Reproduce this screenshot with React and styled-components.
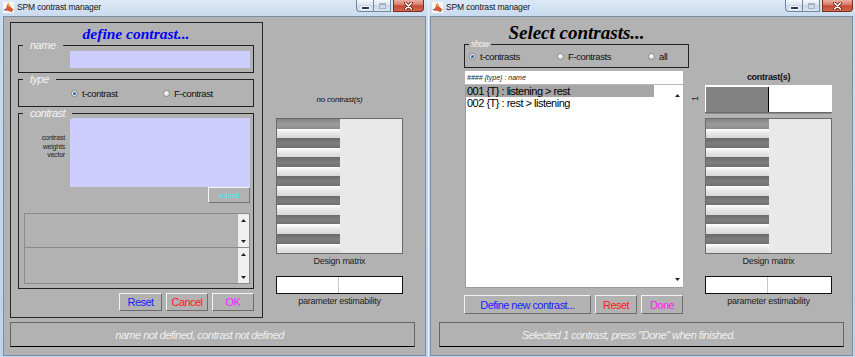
import React from 'react';
import styled, { createGlobalStyle } from 'styled-components';

const Global = createGlobalStyle`
  html, body { margin: 0; padding: 0; background: #c3d6ec; }
  body {
    width: 855px; height: 357px; overflow: hidden;
    font-family: "Liberation Sans", Arial, sans-serif;
  }
  * { box-sizing: border-box; }
`;

const GREY = '#b2b2b2';

const Desktop = styled.div`
  display: flex;
  width: 855px;
  height: 357px;
`;

const Window = styled.div`
  width: ${p => p.$w}px;
  height: 357px;
  display: flex;
  flex-direction: column;
  background: linear-gradient(to bottom, #dce8f6 0px, #c9dbef 16px, #bfd3ea 100%);
  border-left: ${p => (p.$edge ? '1px solid #eaf2fb' : 'none')};
`;

const TitleBar = styled.div`
  height: 16px;
  display: flex;
  align-items: flex-start;
  padding-left: ${p => p.$pl}px;
`;

const AppIcon = styled.svg`
  width: 11px;
  height: 11px;
  margin-top: 2px;
  flex: none;
`;

const TitleText = styled.div`
  margin-left: 3px;
  font-size: 8.5px;
  letter-spacing: -0.15px;
  line-height: 15px;
  color: #141414;
  flex: 1;
`;

const CaptionGroup = styled.div`
  display: flex;
  margin-right: ${p => p.$mr}px;
`;

const CapBtn = styled.div`
  height: 12px;
  width: ${p => p.$w}px;
  display: flex;
  align-items: center;
  justify-content: center;
  border: 1px solid #75869c;
  border-top: none;
  background: linear-gradient(to bottom, #f3f7fc 0%, #dbe6f2 45%, #c7d6e8 50%, #d9e5f2 100%);
  border-radius: ${p => p.$r};
  border-left: ${p => (p.$noLeft ? 'none' : '1px solid #75869c')};
`;

const CloseBtn = styled.div`
  height: 12px;
  width: 31px;
  margin-left: 2px;
  display: flex;
  align-items: center;
  justify-content: center;
  border: 1px solid #7c2d1f;
  border-top: none;
  border-radius: 0 0 4px 0;
  background: linear-gradient(to bottom, #eab0a3 0%, #d77a66 45%, #c24a32 52%, #d2684d 100%);
`;

const MinGlyph = styled.div`
  width: 7px;
  height: 2px;
  margin-top: 4px;
  background: #2f3a48;
  box-shadow: 0 0 0 1px #f4f8fc;
`;

const MaxGlyph = styled.div`
  width: 7px;
  height: 6px;
  border: 1px solid #a6b2c2;
  border-top-width: 2px;
`;

const Frame = styled.div`
  flex: 1;
  display: flex;
  padding: 0 ${p => p.$pr}px 1px ${p => p.$pl}px;
`;

const Client = styled.div`
  width: 423px;
  height: 340px;
  border: 1px solid #7b8ea6;
  background: ${GREY};
  padding: 5px 0 0 ${p => p.$pl}px;
  display: flex;
  flex-direction: column;
`;

const Row = styled.div`
  height: 296px;
  display: flex;
  align-items: flex-start;
  gap: ${p => p.$gap}px;
  padding-left: ${p => p.$pl || 0}px;
`;

const Status = styled.div`
  margin-top: 4px;
  width: 405px;
  height: 25px;
  border: 1px solid #666;
  border-bottom: 1px solid #000;
  display: flex;
  align-items: center;
  justify-content: center;
  padding-right: 26px;
  font-size: 11px;
  letter-spacing: -0.5px;
  font-style: italic;
  color: #f0f0f0;
`;

/* ---------- window 1 ---------- */

const DefineFrame = styled.div`
  width: 253px;
  height: 296px;
  border: 1px solid #262626;
  padding: 0 8px 6px 7px;
  display: flex;
  flex-direction: column;
`;

const Heading = styled.div`
  height: 22px;
  line-height: 22px;
  text-align: center;
  font-family: "Liberation Serif", "Times New Roman", serif;
  font-weight: bold;
  font-style: italic;
  font-size: ${p => p.$size}px;
  color: ${p => p.$color};
`;

const Group = styled.div`
  position: relative;
  border: 1px solid #222;
  margin-top: ${p => p.$mt || 0}px;
  padding: ${p => p.$pad};
  display: flex;
  flex-direction: ${p => p.$dir || 'row'};
  align-items: ${p => p.$align || 'stretch'};
  height: ${p => (p.$h ? `${p.$h}px` : 'auto')};
`;

const Legend = styled.div`
  position: absolute;
  top: ${p => p.$top}px;
  left: ${p => p.$left}px;
  padding: 0 ${p => p.$px}px;
  background: ${GREY};
  font-size: ${p => p.$size}px;
  line-height: 12px;
  font-style: italic;
  color: #f2f2f2;
  letter-spacing: -0.5px;
`;

const Field = styled.div`
  width: 180px;
  height: ${p => p.$h}px;
  background: #cdcdfe;
  flex: none;
`;

const RadioItem = styled.div`
  display: flex;
  align-items: center;
  gap: 4px;
  width: ${p => (p.$w ? `${p.$w}px` : 'auto')};
  font-size: 9.5px;
  letter-spacing: -0.4px;
  color: #111;
`;

const RadioDot = styled.span`
  width: 7px;
  height: 7px;
  border-radius: 50%;
  border: 1px solid #8d8d8d;
  background: radial-gradient(circle at 40% 35%, #ffffff 0%, #e4e4e4 60%, #c9c9c9 100%);
  display: flex;
  align-items: center;
  justify-content: center;
  flex: none;
  &::after {
    content: '';
    width: 3px;
    height: 3px;
    border-radius: 50%;
    background: ${p => (p.$on ? '#1e63b5' : 'transparent')};
  }
`;

const FieldRow = styled.div`
  display: flex;
  gap: 5px;
`;

const WeightsLabel = styled.div`
  width: 41px;
  margin-top: 16px;
  text-align: right;
  font-size: 7px;
  line-height: 8.5px;
  letter-spacing: -0.2px;
  color: #222;
`;

const SubmitRow = styled.div`
  display: flex;
  justify-content: flex-end;
`;

const SubmitBtn = styled.div`
  width: 42px;
  height: 16px;
  border-top: 1px solid #f4f4f4;
  border-left: 1px solid #f4f4f4;
  border-right: 1px solid #777;
  border-bottom: 1px solid #777;
  display: flex;
  align-items: center;
  justify-content: center;
  font-size: 7px;
  color: #1ff4f4;
`;

const ListStack = styled.div`
  margin-top: 10px;
  width: 226px;
  display: flex;
  flex-direction: column;
`;

const GreyList = styled.div`
  height: ${p => p.$h}px;
  border: 1px solid #8a8a8a;
  border-top: ${p => (p.$noTop ? 'none' : '1px solid #8a8a8a')};
  display: flex;
`;

const ListBody = styled.div`
  flex: 1;
`;

const ScrollBar = styled.div`
  width: 11px;
  background: ${p => p.$bg};
  display: flex;
  flex-direction: column;
  justify-content: space-between;
  align-items: center;
  padding: ${p => p.$pad};
`;

const ButtonRow = styled.div`
  display: flex;
  justify-content: ${p => p.$justify || 'flex-end'};
  gap: 4px;
  margin-top: ${p => p.$mt}px;
`;

const PushButton = styled.div`
  width: ${p => p.$w}px;
  height: ${p => p.$h}px;
  border-top: 1px solid #f2f2f2;
  border-left: 1px solid #f2f2f2;
  border-right: 1px solid #6c6c6c;
  border-bottom: 1px solid #6c6c6c;
  display: flex;
  align-items: center;
  justify-content: center;
  font-size: 11px;
  letter-spacing: -0.55px;
  color: ${p => p.$color};
`;

/* ---------- right-hand design matrix column ---------- */

const MatrixCol = styled.div`
  width: 127px;
  display: flex;
  flex-direction: column;
  padding-top: ${p => p.$pt}px;
`;

const SmallNote = styled.div`
  height: 10px;
  line-height: 10px;
  text-align: center;
  font-size: 8px;
  font-style: italic;
  letter-spacing: -0.2px;
  color: #111;
  margin-bottom: 13px;
`;

const ContrastTitle = styled.div`
  height: 12px;
  line-height: 12px;
  text-align: center;
  font-size: 9px;
  font-weight: bold;
  letter-spacing: -0.3px;
  color: #111;
  margin-bottom: 2px;
`;

const ContrastBar = styled.div`
  position: relative;
  height: 28px;
  background: #fff;
  padding: 2px 0 0 1px;
  border-bottom: 1px solid #6a6a6a;
  box-shadow: 0 2px 0 -1px #8a8a8a;
  display: flex;
  margin-bottom: 5px;
`;

const ContrastFill = styled.div`
  width: 63px;
  background: #828282;
  border-right: 1px solid #000;
`;

const TickLabel = styled.span`
  position: absolute;
  display: block;
  left: -14px;
  top: 9px;
  width: 9px;
  height: 9px;
  text-align: center;
  font-size: 9px;
  line-height: 9px;
  color: #222;
  transform: rotate(-90deg);
  transform-origin: 50% 50%;
`;

const Matrix = styled.div`
  height: 136px;
  border: 1px solid #6a6a6a;
  display: flex;
  background: #e9e9e9;
`;

const StripeCol = styled.div`
  width: 63px;
  display: flex;
  flex-direction: column;
`;

const Band = styled.div`
  flex: 1;
  background: ${p =>
    p.$first
      ? 'linear-gradient(to bottom, #858585, #9b9b9b 55%, #8c8c8c)'
      : p.$dark
      ? 'linear-gradient(to bottom, #6a6a6a, #7e7e7e 55%, #707070)'
      : 'linear-gradient(to bottom, #ffffff, #e6e6e6 50%, #d8d8d8)'};
`;

const CaptionLabel = styled.div`
  height: 14px;
  line-height: 14px;
  text-align: center;
  font-size: 9px;
  letter-spacing: -0.25px;
  color: #222;
`;

const EstBox = styled.div`
  margin-top: 8px;
  height: 18px;
  border: 1px solid #111;
  background: #fff;
  display: flex;
`;

const EstHalf = styled.div`
  width: 62px;
  border-right: 1px solid #c8c8c8;
`;

/* ---------- window 2 ---------- */

const SelectCol = styled.div`
  width: 225px;
  display: flex;
  flex-direction: column;
`;

const ShowGroup = styled(Group)`
  height: 24px;
  padding-left: 4px;
  align-items: center;
`;

const ListHeader = styled.div`
  margin: 3px 0 0 1px;
  width: 218px;
  height: 14px;
  background: #fff;
  border-bottom: 1px solid #b9b9b9;
  padding-left: 2px;
  font-size: 7px;
  line-height: 13px;
  font-style: italic;
  color: #222;
`;

const WhiteList = styled.div`
  margin-left: 1px;
  width: 218px;
  height: 203px;
  background: #fff;
  border-left: 1px solid #9c9c9c;
  border-bottom: 1px solid #9c9c9c;
  display: flex;
`;

const ListItem = styled.div`
  width: 188px;
  height: 12px;
  line-height: 12px;
  padding-left: 1px;
  font-size: 11px;
  letter-spacing: -0.5px;
  color: #000;
  white-space: nowrap;
  background: ${p => (p.$selected ? '#a6a6a6' : 'transparent')};
`;

const Arrow = ({ up }) => (
  <svg width="5" height="3" viewBox="0 0 5 3">
    <polygon points={up ? '2.5,0 5,3 0,3' : '0,0 5,0 2.5,3'} fill="#222" />
  </svg>
);

const MatlabIcon = () => (
  <AppIcon viewBox="0 0 11 11">
    <rect x="0" y="0" width="11" height="11" fill="#f7f7f7" />
    <polygon points="0.5,8 3,6.5 4.5,2 5.5,1 7,4.5 10.5,7.5 7,9.5 3.5,8.5" fill="#e0572a" />
    <polygon points="4.5,2 5.5,1 6.2,3 5.2,5.5" fill="#f5a623" />
    <polygon points="0.5,8 3,6.5 3.5,8.5" fill="#2f6db5" />
    <polygon points="7,9.5 10.5,7.5 8.5,10" fill="#a2361d" />
  </AppIcon>
);

const CloseGlyph = () => (
  <svg width="9" height="8" viewBox="0 0 9 8">
    <path d="M1.5 1 L7.5 7 M7.5 1 L1.5 7" stroke="#5a1a10" strokeWidth="3" strokeLinecap="round" />
    <path d="M1.5 1 L7.5 7 M7.5 1 L1.5 7" stroke="#ffffff" strokeWidth="1.6" strokeLinecap="round" />
  </svg>
);

const Chrome = ({ pl, mr }) => (
  <TitleBar $pl={pl}>
    <MatlabIcon />
    <TitleText>SPM contrast manager</TitleText>
    <CaptionGroup $mr={mr}>
      <CapBtn $w={18} $r="0 0 0 4px">
        <MinGlyph />
      </CapBtn>
      <CapBtn $w={17} $r="0" $noLeft>
        <MaxGlyph />
      </CapBtn>
      <CloseBtn>
        <CloseGlyph />
      </CloseBtn>
    </CaptionGroup>
  </TitleBar>
);

const DesignMatrix = () => (
  <>
    <Matrix>
      <StripeCol>
        {Array.from({ length: 14 }).map((_, i) => (
          <Band key={i} $dark={i % 2 === 0} $first={i === 0} />
        ))}
      </StripeCol>
    </Matrix>
    <CaptionLabel>Design matrix</CaptionLabel>
    <EstBox>
      <EstHalf />
    </EstBox>
    <CaptionLabel>parameter estimability</CaptionLabel>
  </>
);

const Radio = ({ on, w, children }) => (
  <RadioItem $w={w}>
    <RadioDot $on={on} />
    <span>{children}</span>
  </RadioItem>
);

export default function App() {
  return (
    <>
      <Global />
      <Desktop>
        <Window $w={428}>
          <Chrome pl={3} mr={4} />
          <Frame $pl={3} $pr={2}>
            <Client $pl={6}>
              <Row $gap={13}>
                <DefineFrame>
                  <Heading $size={15.5} $color="#0000f5">define contrast...</Heading>
                  <Group $pad="5px 3px 4px 51px">
                    <Legend $top={-7} $left={4} $px={7} $size={11}>name</Legend>
                    <Field $h={17} />
                  </Group>
                  <Group $mt={6} $h={28} $pad="0 0 0 52px" $align="center">
                    <Legend $top={-7} $left={4} $px={7} $size={11}>type</Legend>
                    <Radio on w={92}>t-contrast</Radio>
                    <Radio>F-contrast</Radio>
                  </Group>
                  <Group $mt={6} $dir="column" $pad="4px 3px 4px 5px">
                    <Legend $top={-7} $left={4} $px={7} $size={11}>contrast</Legend>
                    <FieldRow>
                      <WeightsLabel>
                        contrast
                        <br />
                        weights
                        <br />
                        vector
                      </WeightsLabel>
                      <Field $h={69} />
                    </FieldRow>
                    <SubmitRow>
                      <SubmitBtn>submit</SubmitBtn>
                    </SubmitRow>
                    <ListStack>
                      <GreyList $h={35}>
                        <ListBody />
                        <ScrollBar $bg="#efefef" $pad="5px 0 4px">
                          <Arrow up />
                          <Arrow />
                        </ScrollBar>
                      </GreyList>
                      <GreyList $h={36} $noTop>
                        <ListBody />
                        <ScrollBar $bg="#efefef" $pad="5px 0 4px">
                          <Arrow up />
                          <Arrow />
                        </ScrollBar>
                      </GreyList>
                    </ListStack>
                  </Group>
                  <ButtonRow $mt={4}>
                    <PushButton $w={43} $h={18} $color="#1a1aff">Reset</PushButton>
                    <PushButton $w={42} $h={18} $color="#ff1a1a">Cancel</PushButton>
                    <PushButton $w={42} $h={18} $color="#ff1aff">OK</PushButton>
                  </ButtonRow>
                </DefineFrame>
                <MatrixCol $pt={73}>
                  <SmallNote>no contrast(s)</SmallNote>
                  <DesignMatrix />
                </MatrixCol>
              </Row>
              <Status>name not defined, contrast not defined</Status>
            </Client>
          </Frame>
        </Window>

        <Window $w={427} $edge>
          <Chrome pl={3} mr={2} />
          <Frame $pl={1} $pr={2}>
            <Client $pl={8}>
              <Row $gap={16} $pl={25}>
                <SelectCol>
                  <Heading $size={19} $color="#000">Select contrasts...</Heading>
                  <ShowGroup>
                    <Legend $top={-7} $left={4} $px={2} $size={8.5}>show</Legend>
                    <Radio on w={88}>t-contrasts</Radio>
                    <Radio w={91}>F-contrasts</Radio>
                    <Radio>all</Radio>
                  </ShowGroup>
                  <ListHeader>#### {'{type}'} : name</ListHeader>
                  <WhiteList>
                    <ListBody>
                      <ListItem $selected>001 {'{T}'} : listening &gt; rest</ListItem>
                      <ListItem>002 {'{T}'} : rest &gt; listening</ListItem>
                    </ListBody>
                    <ScrollBar $bg="#fff" $pad="9px 0 6px">
                      <Arrow up />
                      <Arrow />
                    </ScrollBar>
                  </WhiteList>
                  <ButtonRow $mt={7} $justify="flex-start">
                    <PushButton $w={127} $h={19} $color="#2020ff">Define new contrast...</PushButton>
                    <PushButton $w={42} $h={19} $color="#ff1a1a">Reset</PushButton>
                    <PushButton $w={42} $h={19} $color="#ff1aff">Done</PushButton>
                  </ButtonRow>
                </SelectCol>
                <MatrixCol $pt={49}>
                  <ContrastTitle>contrast(s)</ContrastTitle>
                  <ContrastBar>
                    <TickLabel>1</TickLabel>
                    <ContrastFill />
                  </ContrastBar>
                  <DesignMatrix />
                </MatrixCol>
              </Row>
              <Status>Selected 1 contrast, press "Done" when finished.</Status>
            </Client>
          </Frame>
        </Window>
      </Desktop>
    </>
  );
}
